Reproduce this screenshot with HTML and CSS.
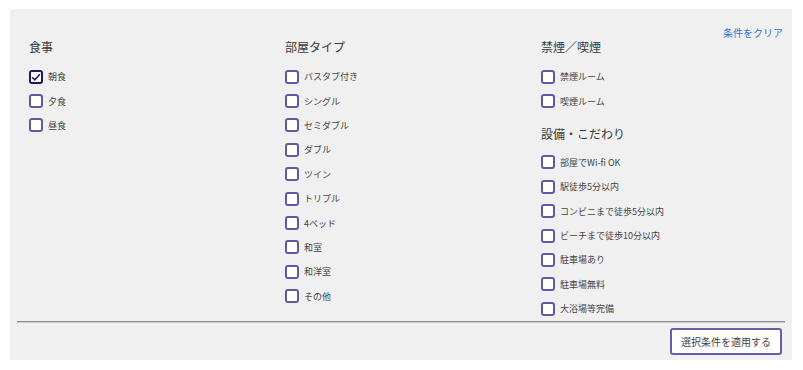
FILE: index.html
```html
<!DOCTYPE html>
<html lang="ja">
<head>
<meta charset="utf-8">
<link rel="stylesheet" href="styles.css">
</head>
<body>
<div class="panel">
  <div class="toprow"><a class="clear" href="#">条件をクリア</a></div>
  <div class="cols">
    <div class="col">
      <div class="heading">食事</div>
      <label class="item"><span class="box checked"><svg viewBox="0 0 14 14" width="14" height="14"><path d="M3.2 7.2 L5.8 9.8 L10.8 4.2" fill="none" stroke="#1e1a5c" stroke-width="1.6"/></svg></span>朝食</label>
      <label class="item"><span class="box"></span>夕食</label>
      <label class="item"><span class="box"></span>昼食</label>
    </div>
    <div class="col">
      <div class="heading">部屋タイプ</div>
      <label class="item"><span class="box"></span>バスタブ付き</label>
      <label class="item"><span class="box"></span>シングル</label>
      <label class="item"><span class="box"></span>セミダブル</label>
      <label class="item"><span class="box"></span>ダブル</label>
      <label class="item"><span class="box"></span>ツイン</label>
      <label class="item"><span class="box"></span>トリプル</label>
      <label class="item"><span class="box"></span>4ベッド</label>
      <label class="item"><span class="box"></span>和室</label>
      <label class="item"><span class="box"></span>和洋室</label>
      <label class="item"><span class="box"></span>その他</label>
    </div>
    <div class="col">
      <div class="heading">禁煙／喫煙</div>
      <label class="item"><span class="box"></span>禁煙ルーム</label>
      <label class="item"><span class="box"></span>喫煙ルーム</label>
      <div class="heading second">設備・こだわり</div>
      <label class="item"><span class="box"></span>部屋でWi-fi OK</label>
      <label class="item"><span class="box"></span>駅徒歩5分以内</label>
      <label class="item"><span class="box"></span>コンビニまで徒歩5分以内</label>
      <label class="item"><span class="box"></span>ビーチまで徒歩10分以内</label>
      <label class="item"><span class="box"></span>駐車場あり</label>
      <label class="item"><span class="box"></span>駐車場無料</label>
      <label class="item"><span class="box"></span>大浴場等完備</label>
    </div>
  </div>
  <div class="rule"></div>
  <div class="footer"><button class="apply">選択条件を適用する</button></div>
</div>
</body>
</html>
```

FILE: styles.css
```css
html, body {
  margin: 0;
  padding: 0;
  background: #ffffff;
}
body {
  font-family: "Noto Sans CJK JP", "Noto Sans", sans-serif;
  color: #333333;
}
.panel {
  margin: 9px 11px 0 10px;
  background: #f0f0f0;
  padding: 0 7px 5px 7px;
  height: 351px;
  box-sizing: border-box;
}
.toprow {
  display: flex;
  justify-content: flex-end;
  padding-top: 18px;
  padding-right: 2px;
  height: 12px;
}
.clear {
  font-size: 10px;
  line-height: 12px;
  color: #3b6fd8;
  text-decoration: none;
}
.cols {
  display: grid;
  grid-template-columns: 256px 256px 256px;
  height: 282px;
}
.col {
  padding-left: 12px;
  display: flex;
  flex-direction: column;
}
.heading {
  font-size: 12px;
  line-height: 16px;
  color: #3a3a3a;
  margin-bottom: 9.5px;
}
.heading.second {
  margin-top: 12.5px;
  margin-bottom: 8.4px;
}
.item {
  display: flex;
  align-items: center;
  height: 24.4px;
  font-size: 9px;
  color: #444444;
}
.box {
  width: 14px;
  height: 14px;
  box-sizing: border-box;
  border: 2px solid #6658a0;
  border-radius: 3px;
  background: #ffffff;
  margin-right: 5px;
  position: relative;
  flex: none;
}
.box.checked {
  border-color: #1e1a5c;
}
.box svg {
  position: absolute;
  left: -2px;
  top: -2px;
}
.rule {
  border-top: 1px solid #8e8e8e;
  border-bottom: 1px solid #c9c9c9;
}
.footer {
  display: flex;
  justify-content: flex-end;
  padding-top: 5px;
  padding-right: 3px;
}
.apply {
  font-family: "Noto Sans CJK JP", "Noto Sans", sans-serif;
  font-size: 10px;
  color: #444444;
  background: #ffffff;
  border: 2px solid #6a5ca6;
  border-radius: 3px;
  height: 27px;
  width: 112px;
  padding: 0;
}
```
